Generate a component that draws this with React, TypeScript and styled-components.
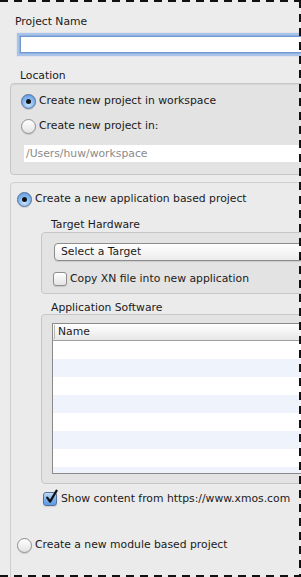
import React from "react";
import styled, { createGlobalStyle } from "styled-components";

const GlobalStyle = createGlobalStyle`
  html, body {
    margin: 0;
    padding: 0;
    background: #ececec;
  }
  * {
    box-sizing: border-box;
  }
`;

const App = () => {
  return (
    <Frame>
      <GlobalStyle />
      <Content>
        <Label indent={15} top={15}>Project Name</Label>
        <NameInput />

        <Label indent={20} top={16}>Location</Label>
        <LocationGroup>
          <OptionRow>
            <Radio checked />
            <OptionText>Create new project in workspace</OptionText>
          </OptionRow>
          <OptionRow gap={9}>
            <Radio />
            <OptionText>Create new project in:</OptionText>
          </OptionRow>
          <PathField>/Users/huw/workspace</PathField>
        </LocationGroup>

        <ProjectGroup>
          <OptionRow>
            <Radio checked />
            <OptionText>Create a new application based project</OptionText>
          </OptionRow>

          <SubLabel top={11}>Target Hardware</SubLabel>
          <InnerGroup>
            <Select>Select a Target</Select>
            <OptionRow gap={10}>
              <Checkbox />
              <OptionText>Copy XN file into new application</OptionText>
            </OptionRow>
          </InnerGroup>

          <SubLabel top={7}>Application Software</SubLabel>
          <SoftwareGroup>
            <Table>
              <TableHead>
                <HeadCell>Name</HeadCell>
              </TableHead>
              <TableRows />
            </Table>
          </SoftwareGroup>

          <ShowRow>
            <Checkbox checked>
              <svg width="15" height="16" viewBox="0 0 15 16">
                <path
                  d="M3.2 8.6 L6.1 12.6 L12.6 1.6"
                  fill="none"
                  stroke="#111"
                  strokeWidth="2.2"
                  strokeLinecap="round"
                  strokeLinejoin="round"
                />
              </svg>
            </Checkbox>
            <OptionText>Show content from https://www.xmos.com</OptionText>
          </ShowRow>

          <OptionRow gap={30}>
            <Radio />
            <OptionText>Create a new module based project</OptionText>
          </OptionRow>
        </ProjectGroup>
      </Content>
    </Frame>
  );
};

export default App;

const Frame = styled.div`
  position: relative;
  width: 301px;
  height: 577px;
  overflow: hidden;
  background: #ececec;
  font-family: "DejaVu Sans", "Lucida Grande", sans-serif;
  font-size: 10.8px;
  color: #1a1a1a;

  &::after {
    content: "";
    position: absolute;
    inset: 0;
    pointer-events: none;
    background:
      repeating-linear-gradient(90deg, #111 0 8px, transparent 8px 14px) left top / 100% 2px no-repeat,
      repeating-linear-gradient(180deg, #111 0 8px, transparent 8px 14px) right top / 2px 100% no-repeat,
      repeating-linear-gradient(90deg, #111 0 8px, transparent 8px 14px) left bottom / 100% 2px no-repeat;
  }
`;

const Content = styled.div`
  width: 380px;
  display: flex;
  flex-direction: column;
  align-items: flex-start;
`;

const Label = styled.div<{ indent: number; top: number }>`
  margin-left: ${({ indent }) => indent}px;
  margin-top: ${({ top }) => top}px;
  line-height: 13px;
`;

const SubLabel = styled.div<{ top: number }>`
  margin-left: 34px;
  margin-top: ${({ top }) => top}px;
  line-height: 13px;
`;

const NameInput = styled.div`
  margin-top: 8px;
  margin-left: 20px;
  width: 340px;
  height: 17px;
  background: #fff;
  border: 1px solid #6f98cf;
  box-shadow: 0 0 0 1px #8fb2e0, 0 0 1px 3px #a9c4e8;
`;

const LocationGroup = styled.div`
  margin-top: 1px;
  margin-left: 10px;
  width: 360px;
  height: 92px;
  padding: 9px 10px 0;
  background: #e3e3e3;
  border: 1px solid #c6c6c6;
  border-radius: 4px;
  box-shadow: inset 0 1px 1px rgba(0, 0, 0, 0.06);
  display: flex;
  flex-direction: column;
  align-items: flex-start;
`;

const OptionRow = styled.div<{ gap?: number }>`
  display: flex;
  align-items: center;
  gap: 3px;
  margin-top: ${({ gap }) => gap ?? 0}px;
  height: 16px;
`;

const OptionText = styled.span`
  line-height: 16px;
  white-space: nowrap;
`;

const Radio = styled.span<{ checked?: boolean }>`
  position: relative;
  flex: none;
  width: 15px;
  height: 15px;
  border-radius: 50%;
  border: 1px solid ${({ checked }) => (checked ? "#52719e" : "#8f8f8f")};
  background: ${({ checked }) =>
    checked
      ? "radial-gradient(circle at 50% 70%, #cfe4fb 0%, #8dbcef 45%, #4f8fdc 100%)"
      : "linear-gradient(#ffffff, #f1f1f1 50%, #e2e2e2)"};
  box-shadow: 0 1px 1px rgba(0, 0, 0, 0.12);

  &::after {
    content: "";
    display: ${({ checked }) => (checked ? "block" : "none")};
    position: absolute;
    left: 4px;
    top: 4px;
    width: 5px;
    height: 5px;
    border-radius: 50%;
    background: #101418;
  }
`;

const Checkbox = styled.span<{ checked?: boolean }>`
  position: relative;
  flex: none;
  width: 14px;
  height: 14px;
  border-radius: 3px;
  border: 1px solid ${({ checked }) => (checked ? "#52719e" : "#8f8f8f")};
  background: ${({ checked }) =>
    checked
      ? "linear-gradient(#c4dcf7, #7fb0ea 50%, #5d9be3)"
      : "linear-gradient(#ffffff, #f1f1f1 50%, #e4e4e4)"};
  box-shadow: 0 1px 1px rgba(0, 0, 0, 0.12);

  svg {
    position: absolute;
    left: 0;
    top: -4px;
  }
`;

const PathField = styled.div`
  margin-top: 11px;
  margin-left: 3px;
  width: 330px;
  height: 17px;
  padding-left: 2px;
  line-height: 17px;
  background: #fff;
  color: #8a8a8a;
`;

const ProjectGroup = styled.div`
  margin-top: 7px;
  margin-left: 10px;
  width: 360px;
  height: 420px;
  padding: 8px 6px 0;
  background: #ebebeb;
  border: 1px solid #cfcfcf;
  border-radius: 4px;
  display: flex;
  flex-direction: column;
  align-items: flex-start;
`;

const InnerGroup = styled.div`
  margin-top: 1px;
  margin-left: 24px;
  width: 320px;
  height: 62px;
  padding: 10px 11px 0;
  background: #e3e3e3;
  border: 1px solid #c6c6c6;
  border-radius: 4px;
  display: flex;
  flex-direction: column;
  align-items: flex-start;
`;

const Select = styled.div`
  margin-left: 1px;
  width: 300px;
  height: 18px;
  padding-left: 6px;
  line-height: 16px;
  border: 1px solid #8c8c8c;
  border-radius: 4px;
  background: linear-gradient(#ffffff, #f6f6f6 50%, #ececec);
  box-shadow: 0 1px 1px rgba(0, 0, 0, 0.1);
`;

const SoftwareGroup = styled.div`
  margin-left: 24px;
  width: 320px;
  height: 170px;
  padding: 8px 10px 0;
  background: #e3e3e3;
  border: 1px solid #c6c6c6;
  border-radius: 4px;
`;

const Table = styled.div`
  width: 300px;
  height: 151px;
  border: 1px solid #8a8a8a;
  background: #fff;
  display: flex;
  flex-direction: column;
`;

const TableHead = styled.div`
  height: 17px;
  flex: none;
  background: linear-gradient(#ffffff, #f4f4f4 50%, #e6e6e6);
  border-bottom: 1px solid #9e9e9e;
  display: flex;
  align-items: center;
  padding-left: 1px;
`;

const HeadCell = styled.span`
  height: 14px;
  line-height: 14px;
  padding-left: 3px;
  border-left: 1px solid #b8b8b8;
`;

const TableRows = styled.div`
  flex: 1;
  background: repeating-linear-gradient(180deg, #ffffff 0 18px, #eef3fc 18px 36px);
`;

const ShowRow = styled.div`
  display: flex;
  align-items: center;
  gap: 4px;
  margin-top: 7px;
  margin-left: 26px;
  height: 16px;
`;
